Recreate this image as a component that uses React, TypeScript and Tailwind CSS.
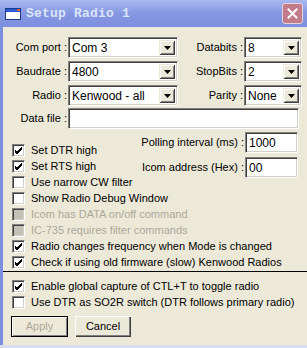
import React from "react";

const Check = () => (
  <svg width="9" height="9" viewBox="0 0 9 9" className="block">
    <path d="M1 4 L3 6 L8 1 M1 5 L3 7 L8 2 M1 6 L3 8 L8 3" stroke="#000" strokeWidth="1" fill="none" shapeRendering="crispEdges" />
  </svg>
);

function CheckRow({ label, checked, disabled }: { label: string; checked?: boolean; disabled?: boolean }) {
  return (
    <div className="h-[16px] flex items-center whitespace-nowrap">
      <div
        className={
          "w-[13px] h-[13px] flex items-center justify-center shrink-0 border-t border-l border-t-[#808080] border-l-[#808080] border-b border-r border-b-white border-r-white shadow-[inset_1px_1px_0_#404040,inset_-1px_-1px_0_#d4d0c8] " +
          (disabled ? "bg-[#c4c1b6]" : "bg-white")
        }
      >
        {checked ? <Check /> : null}
      </div>
      <span className={"ml-[6px] " + (disabled ? "text-[#aca899]" : "text-black")}>{label}</span>
    </div>
  );
}

function Field({ value, w, combo }: { value: string; w: string; combo?: boolean }) {
  return (
    <div
      className={
        "h-[21px] bg-white flex items-center border-t border-l border-t-[#808080] border-l-[#808080] border-b border-r border-b-white border-r-white shadow-[inset_1px_1px_0_#404040,inset_-1px_-1px_0_#d4d0c8] p-[2px] " +
        w
      }
    >
      <span className="flex-1 pl-[1px] leading-none text-[12px] whitespace-nowrap overflow-hidden">{value}</span>
      {combo ? (
        <div className="w-[16px] h-full bg-[#ece9d8] flex items-center justify-center shadow-[inset_1px_1px_0_#ece9d8,inset_-1px_-1px_0_#404040,inset_2px_2px_0_#fff,inset_-2px_-2px_0_#808080]">
          <svg width="7" height="4" viewBox="0 0 7 4" className="block mt-[1px]">
            <path d="M0 0 H7 L3.5 4 Z" fill="#000" />
          </svg>
        </div>
      ) : null}
    </div>
  );
}

export default function App() {
  return (
    <div className="w-[307px] h-[348px] bg-[#ece9d8] flex flex-col overflow-hidden text-[11px] text-black font-['Liberation_Sans',Arial,sans-serif]">
      {/* Title bar */}
      <div className="h-[27px] shrink-0 flex items-center pl-[5px] pr-[4px] bg-linear-to-b from-[#a9b8f0] via-[#8597e2] to-[#7d8fdf]">
        <svg width="16" height="12" viewBox="0 0 16 12" className="block">
          <rect x="0.5" y="0.5" width="15" height="11" fill="#fff" stroke="#1c3a8a" />
          <rect x="1" y="1" width="14" height="3" fill="#2a5bd7" />
          <rect x="12" y="1" width="3" height="2" fill="#e06040" />
        </svg>
        <span className="ml-[5px] font-['Liberation_Mono',monospace] font-bold text-[13px] text-[#dbe4f8] tracking-[0.2px]">
          Setup Radio 1
        </span>
        <div className="ml-auto w-[21px] h-[21px] rounded-[3px] bg-[#c17b8a] border border-[#e8d4dc] flex items-center justify-center">
          <svg width="11" height="11" viewBox="0 0 11 11" className="block">
            <path d="M1.5 1.5 L9.5 9.5 M9.5 1.5 L1.5 9.5" stroke="#fff" strokeWidth="2" strokeLinecap="square" />
          </svg>
        </div>
      </div>

      {/* Body */}
      <div className="flex-1 flex flex-col border-l-[3px] border-l-[#7c8ede] pt-[10px]">
        <div className="flex flex-col gap-[3px] pr-[5px]">
          <div className="flex items-center">
            <span className="w-[65px] text-right pr-[1px]">Com port :</span>
            <Field value="Com 3" w="w-[110px]" combo />
            <span className="w-[66px] text-right pr-[1px]">Databits :</span>
            <Field value="8" w="w-[58px]" combo />
          </div>
          <div className="flex items-center">
            <span className="w-[65px] text-right pr-[1px]">Baudrate :</span>
            <Field value="4800" w="w-[110px]" combo />
            <span className="w-[66px] text-right pr-[1px]">StopBits :</span>
            <Field value="2" w="w-[58px]" combo />
          </div>
          <div className="flex items-center">
            <span className="w-[65px] text-right pr-[1px]">Radio :</span>
            <Field value="Kenwood - all" w="w-[110px]" combo />
            <span className="w-[66px] text-right pr-[1px]">Parity :</span>
            <Field value="None" w="w-[58px]" combo />
          </div>
        </div>
        <div className="flex items-center mt-[2px]">
          <span className="w-[65px] text-right pr-[1px]">Data file :</span>
          <Field value="" w="w-[231px]" />
        </div>

        <div className="flex mt-[3px]">
          <div className="w-[130px] shrink-0 pt-[10px] pl-[9px] flex flex-col">
            <CheckRow label="Set DTR high" checked />
            <CheckRow label="Set RTS high" checked />
            <CheckRow label="Use narrow CW filter" />
            <CheckRow label="Show Radio Debug Window" />
            <CheckRow label="Icom has DATA on/off command" disabled />
            <CheckRow label="IC-735 requires filter commands" disabled />
            <CheckRow label="Radio changes frequency when Mode is changed" checked />
            <CheckRow label="Check if using old firmware (slow) Kenwood Radios" checked />
          </div>
          <div className="flex-1 flex flex-col items-end gap-[4px] pr-[9px]">
            <div className="flex items-center">
              <span className="pr-[1px]">Polling interval (ms) :</span>
              <Field value="1000" w="w-[53px]" />
            </div>
            <div className="flex items-center">
              <span className="pr-[1px]">Icom address (Hex) :</span>
              <Field value="00" w="w-[53px]" />
            </div>
          </div>
        </div>

        <div className="mt-[1px] border-t border-t-black" />
        <div className="pt-[6px] pl-[9px] flex flex-col">
          <CheckRow label="Enable global capture of CTL+T to toggle radio" checked />
          <CheckRow label="Use DTR as SO2R switch (DTR follows primary radio)" />
        </div>

        <div className="flex gap-[7px] pl-[8px] mt-[6px]">
          <div className="w-[57px] h-[21px] border border-black flex items-center justify-center text-[#aca899] shadow-[inset_1px_1px_0_#fff,inset_-1px_-1px_0_#808080]">
            Apply
          </div>
          <div className="w-[56px] h-[21px] flex items-center justify-center shadow-[inset_1px_1px_0_#fff,inset_-1px_-1px_0_#404040,inset_-2px_-2px_0_#808080]">
            Cancel
          </div>
        </div>
        <div className="flex-1" />
      </div>
      <div className="h-[3px] shrink-0 bg-[#d9def0]" />
    </div>
  );
}
